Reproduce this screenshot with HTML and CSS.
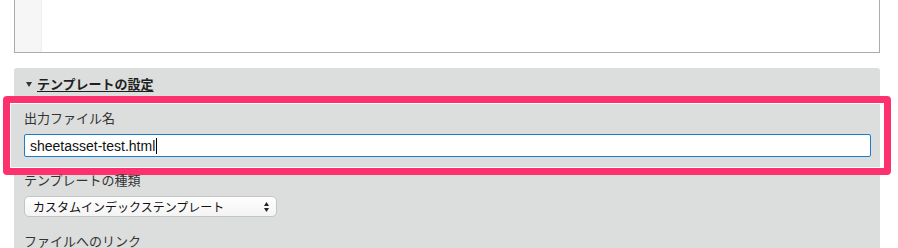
FILE: index.html
```html
<!DOCTYPE html>
<html lang="ja">
<head>
<meta charset="utf-8">
<title>テンプレートの設定</title>
<link rel="stylesheet" href="styles.css">
</head>
<body>
<div class="editor">
  <div class="gutter"></div>
  <div class="editor-body"></div>
</div>

<section class="panel">
  <h2 class="panel-title">
    <span class="caret-down"></span>
    <span class="title-text">テンプレートの設定</span>
  </h2>
  <div class="fields">
    <div class="field highlighted">
      <div class="label">出力ファイル名</div>
      <div class="text-input"><span class="value">sheetasset-test.html</span><span class="cursor"></span></div>
    </div>
    <div class="field">
      <div class="label label-gap">テンプレートの種類</div>
      <div class="select">
        <span class="select-text">カスタムインデックステンプレート</span>
        <svg class="select-arrows" width="5" height="10" viewBox="0 0 5 10">
          <path d="M2.5 0 L5 4 L0 4 Z" fill="#222"/>
          <path d="M0 6 L5 6 L2.5 10 Z" fill="#222"/>
        </svg>
      </div>
    </div>
    <div class="field">
      <div class="label label-gap2">ファイルへのリンク</div>
    </div>
  </div>
</section>
</body>
</html>
```

FILE: styles.css
```css
html, body {
  margin: 0;
  padding: 0;
  background: #ffffff;
}

body {
  width: 898px;
  height: 248px;
  overflow: hidden;
  font-family: "Noto Sans CJK JP", "Liberation Sans", sans-serif;
  color: #333;
}

.editor {
  margin-left: 14px;
  width: 866px;
  height: 53px;
  box-sizing: border-box;
  border: 1px solid #ababab;
  border-top: 0;
  display: flex;
  background: #fff;
}

.gutter {
  width: 26px;
  background: #f6f6f6;
  border-right: 1px solid #efefef;
}

.editor-body {
  flex: 1;
}

.panel {
  margin-top: 15px;
  margin-left: 14px;
  width: 866px;
  min-height: 190px;
  background: #dcdddd;
  border-radius: 3px 3px 0 0;
  padding-top: 6px;
  box-sizing: border-box;
}

.panel-title {
  margin: 0;
  height: 20px;
  display: flex;
  align-items: center;
  padding-left: 12px;
  font-size: 13px;
  font-weight: bold;
  line-height: 20px;
  color: #1e1e1e;
}

.caret-down {
  width: 0;
  height: 0;
  border-left: 3.5px solid transparent;
  border-right: 3.5px solid transparent;
  border-top: 5px solid #333;
  margin-right: 5px;
  margin-top: 1px;
}

.title-text {
  text-decoration: underline;
  text-decoration-thickness: 1px;
  text-underline-offset: 2px;
}

.fields {
  padding-left: 10px;
}

.field {
  position: relative;
}

.highlighted {
  width: 847px;
  margin-top: 15px;
  z-index: 0;
}

.highlighted::before {
  content: "";
  position: absolute;
  left: -21px;
  right: -20px;
  top: -13px;
  bottom: -18px;
  z-index: -1;
  border: 7px solid #fe316f;
  border-radius: 4px;
  background-clip: padding-box;
  background-image: linear-gradient(to right, #ffffff 0, #ffffff 1px, #dcdddd 1px, #dcdddd calc(100% - 4px), #ffffff calc(100% - 4px));
  box-shadow: inset 0 0 0 1px #ffffff;
}

.label {
  font-size: 13px;
  line-height: 18px;
  height: 18px;
  color: #333;
}

.label-gap {
  margin-top: 14px;
}

.label-gap2 {
  margin-top: 15px;
}

.text-input {
  margin-top: 7px;
  width: 847px;
  height: 23px;
  box-sizing: border-box;
  border: 1px solid #1a7ccc;
  border-radius: 2px;
  background: #ffffff;
  padding-left: 5px;
  display: flex;
  align-items: center;
  font-family: "Liberation Sans", Arial, sans-serif;
  font-size: 14px;
  color: #111;
}

.cursor {
  display: inline-block;
  width: 1px;
  height: 16px;
  background: #000;
  margin-left: 1px;
}

.select {
  margin-top: 7px;
  width: 253px;
  height: 21px;
  box-sizing: border-box;
  border: 1px solid #c4c4c4;
  border-radius: 5px;
  background: linear-gradient(#fefefe, #f4f4f4);
  display: flex;
  align-items: center;
  padding-left: 8px;
  padding-right: 7px;
  font-size: 12px;
  line-height: 19px;
  color: #111;
}

.select-arrows {
  margin-left: auto;
  display: block;
}
```
